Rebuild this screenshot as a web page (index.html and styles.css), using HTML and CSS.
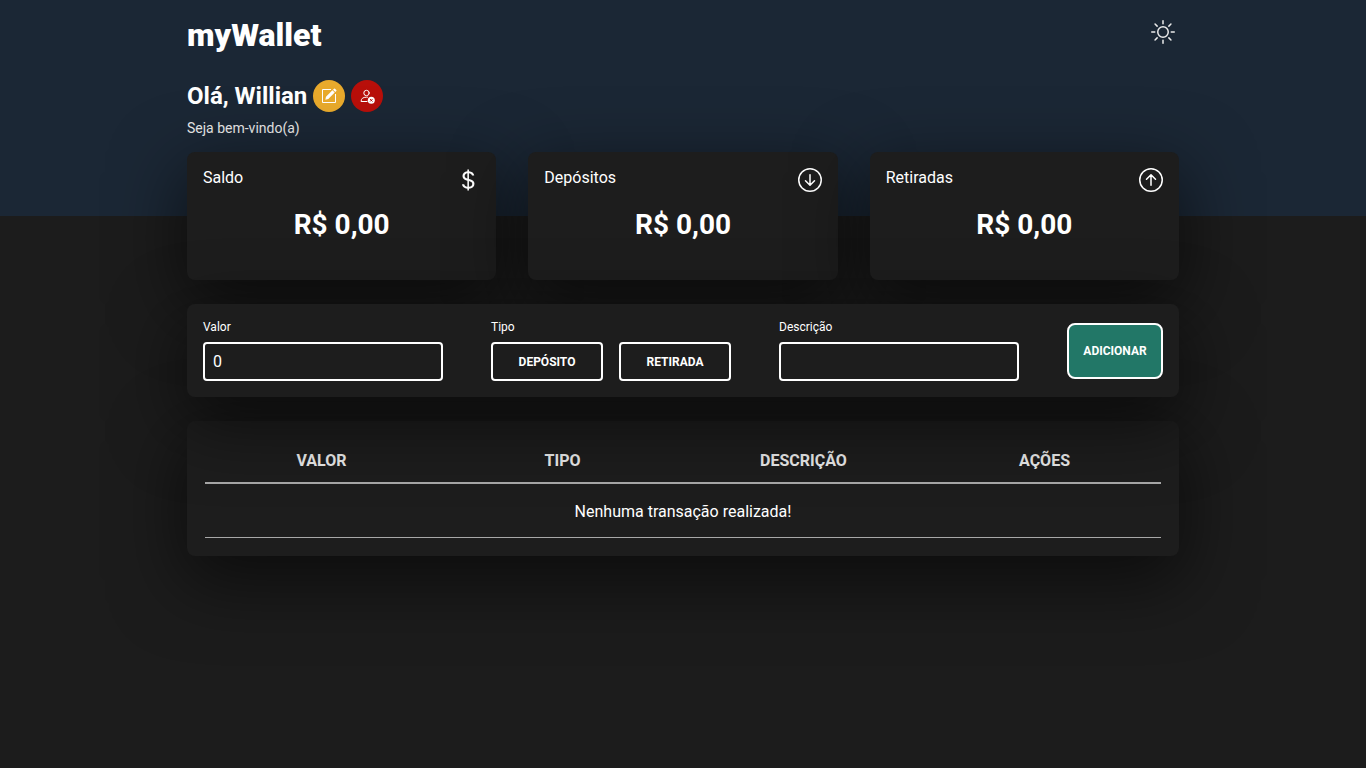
FILE: index.html
```html
<!DOCTYPE html>
<html lang="pt-BR">
<head>
  <meta charset="utf-8">
  <meta name="viewport" content="width=device-width, initial-scale=1">
  <title>myWallet</title>
  <link rel="stylesheet" href="styles.css">
</head>
<body>
  <header class="header">
    <div class="container">
      <div class="topbar">
        <h1 class="logo">myWallet</h1>
        <button class="theme-toggle" type="button" aria-label="Alternar tema">
          <svg class="icon" viewBox="0 0 16 16" fill="none" stroke="currentColor">
            <circle cx="8" cy="8" r="3.5"/>
            <path stroke-linecap="round" d="M8 .5v2M8 13.500v2M.5 8h2M13.500 8h2M2.700 2.700l1.400 1.400M11.900 11.900l1.400 1.400M2.700 13.300l1.400-1.400M11.900 4.100l1.400-1.400"/>
          </svg>
        </button>
      </div>
      <div class="greeting">
        <h2 class="greeting-name">Olá, Willian</h2>
        <button class="round-button edit" type="button" aria-label="Editar nome">
          <svg class="icon-small" viewBox="0 0 16 16">
            <path fill="none" stroke="currentColor" d="M10 1.500H1.500v13h13V6"/>
            <path fill="currentColor" d="M5 8.700 11.400 2.300l2.300 2.300L7.300 11l-3 .8zM12 1.700l1-1q.5-.5 1 0L15.300 2q.5.5 0 1l-1 1z"/>
          </svg>
        </button>
        <button class="round-button remove" type="button" aria-label="Remover usuário">
          <svg class="icon-small" viewBox="0 0 16 16">
            <g fill="none" stroke="currentColor" stroke-linecap="round">
              <circle cx="7.500" cy="5" r="2.700"/>
              <path d="M8 13.500H2.100c0-3 1.900-4.300 5.400-4.300h1"/>
            </g>
            <circle cx="12.300" cy="12.300" r="3.500" fill="currentColor"/>
            <path class="remove-cross" d="m11.100 11.100 2.400 2.400m0-2.400-2.400 2.400"/>
          </svg>
        </button>
      </div>
      <p class="welcome">Seja bem-vindo(a)</p>
    </div>
  </header>

  <main class="container main">
    <section class="cards">
      <article class="card">
        <div class="card-head">
          <h3 class="card-title">Saldo</h3>
          <svg class="icon" viewBox="0 0 16 16" fill="currentColor">
            <path d="M4 10.781c.148 1.667 1.513 2.850 3.591 3.003V15h1.043v-1.216c2.270-.179 3.678-1.438 3.678-3.300 0-1.590-.947-2.510-2.956-3.028l-.722-.187V3.467c1.122.110 1.879.714 2.070 1.616h1.470c-.166-1.600-1.540-2.748-3.540-2.875V1H7.591v1.233c-1.939.230-3.270 1.472-3.270 3.156 0 1.454.966 2.483 2.661 2.917l.610.162v4.031c-1.149-.170-1.940-.800-2.131-1.718H4zm3.391-3.836c-1.043-.263-1.600-.825-1.600-1.616 0-.944.704-1.641 1.800-1.828v3.495l-.200-.050zm1.591 1.872c1.287.323 1.852.859 1.852 1.769 0 1.097-.826 1.828-2.200 1.939V8.730l.348.086z"/>
          </svg>
        </div>
        <p class="card-value">R$ 0,00</p>
      </article>
      <article class="card">
        <div class="card-head">
          <h3 class="card-title">Depósitos</h3>
          <svg class="icon" viewBox="0 0 16 16" fill="none" stroke="currentColor" stroke-linecap="round" stroke-linejoin="round">
            <circle cx="8" cy="8" r="7.500"/>
            <path d="M8 4.500V11M5 8.500l3 3 3-3"/>
          </svg>
        </div>
        <p class="card-value">R$ 0,00</p>
      </article>
      <article class="card">
        <div class="card-head">
          <h3 class="card-title">Retiradas</h3>
          <svg class="icon" viewBox="0 0 16 16" fill="none" stroke="currentColor" stroke-linecap="round" stroke-linejoin="round">
            <circle cx="8" cy="8" r="7.500"/>
            <path d="M8 11.500V5M5 7.500l3-3 3 3"/>
          </svg>
        </div>
        <p class="card-value">R$ 0,00</p>
      </article>
    </section>

    <form class="panel form">
      <div class="field">
        <label class="label" for="valor">Valor</label>
        <input class="input" id="valor" type="text" inputmode="decimal" value="0">
      </div>
      <div class="field" role="group" aria-labelledby="tipo">
        <span class="label" id="tipo">Tipo</span>
        <div class="types">
          <button class="type-button" type="button">DEPÓSITO</button>
          <button class="type-button" type="button">RETIRADA</button>
        </div>
      </div>
      <div class="field">
        <label class="label" for="descricao">Descrição</label>
        <input class="input" id="descricao" type="text">
      </div>
      <button class="add-button" type="button">ADICIONAR</button>
    </form>

    <section class="panel list">
      <table class="table">
        <thead>
          <tr class="row head-row">
            <th scope="col">VALOR</th>
            <th scope="col">TIPO</th>
            <th scope="col">DESCRIÇÃO</th>
            <th scope="col">AÇÕES</th>
          </tr>
        </thead>
        <tbody>
          <tr class="row">
            <td class="empty" colspan="4">Nenhuma transação realizada!</td>
          </tr>
        </tbody>
      </table>
    </section>
  </main>
</body>
</html>
```
FILE: styles.css
```css
:root {
  --background: #1c1c1c;
  --header: #1b2735;
  --surface: #1d1d1d;
  --text: #ffffff;
  --text-soft: #ebebeb;
  --line: #a8a8a8;
  --shadow: 0 22px 70px 4px rgba(0, 0, 0, 0.56);
}

* {
  box-sizing: border-box;
  margin: 0;
  padding: 0;
}

body {
  min-height: 100vh;
  background: var(--background);
  color: var(--text);
  font-family: Roboto, "Liberation Sans", sans-serif;
  font-size: 16px;
  line-height: 19px;
}

button,
input {
  font-family: inherit;
  color: inherit;
}

button {
  cursor: pointer;
}

.container {
  width: 100%;
  max-width: 1024px;
  margin: 0 auto;
  padding: 0 16px;
}

.header {
  padding: 16px 0 80px;
  background: var(--header);
}

.topbar {
  display: flex;
  justify-content: space-between;
  align-items: flex-start;
}

.logo {
  font-size: 32px;
  line-height: 38px;
  font-weight: 900;
}

.theme-toggle {
  display: flex;
  padding: 4px;
  border: 0;
  background: none;
  color: var(--text-soft);
}

.icon {
  width: 24px;
  height: 24px;
}

.icon-small {
  width: 16px;
  height: 16px;
}

.greeting {
  display: flex;
  align-items: center;
  gap: 6px;
  margin-top: 26px;
}

.greeting-name {
  font-size: 24px;
  line-height: 28px;
  font-weight: 700;
}

.round-button {
  display: flex;
  align-items: center;
  justify-content: center;
  width: 32px;
  height: 32px;
  border: 0;
  border-radius: 50%;
}

.edit {
  background: #e9aa2c;
}

.remove {
  background: #b80f0a;
}

.remove-cross {
  fill: none;
  stroke: #b80f0a;
}

.welcome {
  margin-top: 8px;
  color: var(--text-soft);
  font-size: 14px;
  line-height: 16px;
}

.main {
  display: flex;
  flex-direction: column;
  gap: 24px;
  margin-top: -64px;
  padding-bottom: 32px;
}

.cards {
  display: grid;
  grid-template-columns: repeat(3, 1fr);
  gap: 32px;
}

.card {
  min-height: 128px;
  padding: 16px;
  border-radius: 8px;
  background: var(--surface);
  box-shadow: var(--shadow);
}

.card-head {
  display: flex;
  justify-content: space-between;
}

.card-title {
  font-size: 16px;
  font-weight: 400;
}

.card-value {
  margin-top: 16px;
  font-size: 28px;
  line-height: 33px;
  font-weight: 700;
  text-align: center;
}

.panel {
  border-radius: 8px;
  background: var(--surface);
  box-shadow: var(--shadow);
}

.form {
  display: flex;
  flex-wrap: wrap;
  justify-content: space-between;
  align-items: center;
  gap: 16px;
  padding: 16px;
  /* keeps the form and its shadow above the list */
  position: relative;
  z-index: 1;
}

.field {
  display: flex;
  flex-direction: column;
  gap: 8px;
  width: 240px;
}

.label {
  font-size: 12px;
  line-height: 14px;
}

.input {
  width: 100%;
  padding: 8px;
  border: 2px solid var(--text);
  border-radius: 4px;
  background: transparent;
  font-size: 16px;
  line-height: 19px;
}

.types {
  display: flex;
  gap: 16px;
}

.type-button,
.add-button {
  border: 2px solid var(--text);
  font-size: 12px;
  line-height: 14px;
  font-weight: 700;
}

.type-button {
  flex: 1;
  height: 39px;
  border-radius: 4px;
  background: transparent;
}

.add-button {
  width: 96px;
  height: 56px;
  border-radius: 8px;
  background: #227767;
}

.list {
  padding: 18px;
}

.table,
.table thead,
.table tbody {
  display: block;
}

.row {
  display: grid;
  grid-template-columns: repeat(4, 1fr);
  gap: 8px;
  margin-bottom: 2px;
  padding: 16px 0;
  border-bottom: 1px solid var(--line);
  text-align: center;
}

.table tbody .row {
  margin-bottom: 0;
}

.head-row {
  padding: 12px 0;
  border-bottom-width: 2px;
  color: var(--text-soft);
}

.empty {
  grid-column: 1 / -1;
}
```
